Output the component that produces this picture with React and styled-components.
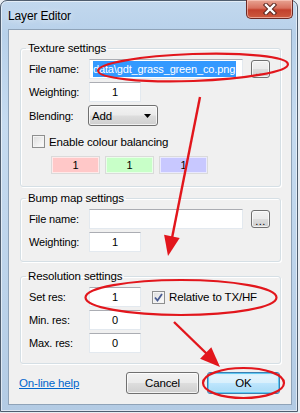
import React from 'react'
import styled, { createGlobalStyle } from 'styled-components'

const GlobalStyle = createGlobalStyle`
  html, body {
    margin: 0;
    padding: 0;
    background: #e9eef3;
  }
  body {
    font-family: "Liberation Sans", Arial, sans-serif;
    font-size: 11px;
    letter-spacing: -0.15px;
    color: #000;
  }
`

const Stage = styled.div`
  position: relative;
  width: 300px;
  height: 413px;
  overflow: hidden;
`

const Window = styled.div`
  box-sizing: border-box;
  width: 298px;
  height: 412px;
  border: 1px solid #4f5d6e;
  border-radius: 7px 7px 0 0;
  background: linear-gradient(180deg, #c2d8ee 0%, #b8d1ea 8%, #c6dbf0 30%, #bcd3ea 70%, #b3cbe4 100%);
  box-shadow: inset 0 0 0 1px rgba(255, 255, 255, 0.55);
  display: flex;
  flex-direction: column;
`

const TitleBar = styled.div`
  height: 28px;
  display: flex;
  align-items: flex-start;
  justify-content: space-between;
`

const Title = styled.div`
  padding: 7px 0 0 7px;
  font-size: 12px;
  line-height: 16px;
  color: #000;
  text-shadow: 0 0 6px rgba(255, 255, 255, 0.9);
`

const CloseButton = styled.div`
  width: 47px;
  height: 19px;
  margin: -1px 4px 0 0;
  box-sizing: border-box;
  border: 1px solid #6b2a25;
  border-top: none;
  border-radius: 0 0 5px 5px;
  background: linear-gradient(180deg, #e8a493 0%, #d8705e 45%, #c2402c 55%, #cc5a3f 100%);
  box-shadow: inset 0 0 0 1px rgba(255, 210, 200, 0.6);
  display: flex;
  align-items: center;
  justify-content: center;
`

const Client = styled.div`
  box-sizing: border-box;
  width: 284px;
  height: 376px;
  margin-left: 7px;
  border: 1px solid #8fa3b8;
  background: #f0f0f0;
  padding: 10px 10px 10px 11px;
  display: flex;
  flex-direction: column;
`

const Group = styled.fieldset`
  margin: ${p => p.$top || 0}px 0 0 0;
  padding: 0 8px ${p => p.$bottom || 9}px 8px;
  border: 1px solid #d5dfe5;
  border-radius: 3px;
  min-width: 0;
  box-shadow: inset 1px 1px 0 #fff, 1px 1px 0 #fff;
`

const Legend = styled.legend`
  padding: 0 2px;
  margin-left: -3px;
  font-size: 11.5px;
  line-height: 16px;
`

const Row = styled.div`
  display: flex;
  align-items: center;
  height: ${p => p.$h || 20}px;
  margin-top: ${p => p.$mt ?? 3}px;
`

const Label = styled.span`
  width: 60px;
  flex: none;
  line-height: 20px;
`

const TextBox = styled.div`
  box-sizing: border-box;
  width: ${p => p.$w}px;
  height: 20px;
  flex: none;
  background: #fff;
  border: 1px solid #e3e9ef;
  border-top-color: #abadb3;
  display: flex;
  align-items: center;
  justify-content: ${p => (p.$left ? 'flex-start' : 'center')};
  padding: 0 3px;
  line-height: 16px;
  overflow: hidden;
  white-space: nowrap;
`

const Selected = styled.span`
  background: #3399ff;
  color: #fff;
  line-height: 16px;
  padding-right: 1px;
`

const SmallButton = styled.div`
  box-sizing: border-box;
  width: 19px;
  height: 18px;
  margin-left: 8px;
  flex: none;
  border: 1px solid #707070;
  border-radius: 3px;
  background: linear-gradient(180deg, #f2f2f2 0%, #ebebeb 48%, #dddddd 52%, #cfcfcf 100%);
  box-shadow: inset 0 0 0 1px rgba(255, 255, 255, 0.7);
  display: flex;
  align-items: flex-end;
  justify-content: center;
  font-size: 11px;
  line-height: 12px;
  letter-spacing: 0.5px;
`

const Select = styled.div`
  box-sizing: border-box;
  width: 70px;
  height: 21px;
  margin-left: -1px;
  border: 1px solid #707070;
  border-radius: 3px;
  background: linear-gradient(180deg, #f2f2f2 0%, #ebebeb 48%, #dddddd 52%, #cfcfcf 100%);
  box-shadow: inset 0 0 0 1px rgba(255, 255, 255, 0.7);
  display: flex;
  align-items: center;
  justify-content: space-between;
  padding: 0 6px 0 3px;
  font-size: 11.5px;
`

const CheckBox = styled.div`
  box-sizing: border-box;
  width: 13px;
  height: 13px;
  flex: none;
  margin: 0 4px 0 ${p => p.$ml || 0}px;
  border: 1px solid #8e8f8f;
  background: linear-gradient(135deg, #dcdcdc 0%, #f4f4f4 70%, #fdfdfd 100%);
  box-shadow: inset 0 0 0 1px #f4f4f4;
  display: flex;
  align-items: center;
  justify-content: center;
`

const CheckLabel = styled.span`
  font-size: 11.5px;
  line-height: 16px;
`

const ColourRow = styled.div`
  display: flex;
  gap: 5px;
  margin: 8px 0 0 22px;
`

const Swatch = styled.div`
  box-sizing: border-box;
  width: 49px;
  height: 18px;
  border: 1px solid #dadada;
  background: ${p => p.$bg};
  display: flex;
  align-items: center;
  justify-content: center;
  box-shadow: inset 0 0 0 1px rgba(255, 255, 255, 0.6);
`

const Footer = styled.div`
  display: flex;
  align-items: center;
  margin-top: 8px;
  height: 22px;
`

const HelpLink = styled.a`
  margin-left: -1px;
  color: #0066cc;
  text-decoration: underline;
  font-size: 11.5px;
  cursor: pointer;
`

const Spacer = styled.div`
  flex: 1;
`

const PushButton = styled.div`
  box-sizing: border-box;
  width: 73px;
  height: 22px;
  margin-left: ${p => p.$ml || 0}px;
  margin-right: ${p => p.$mr || 0}px;
  border: 1px solid ${p => (p.$default ? '#3c7fb1' : '#707070')};
  border-radius: 3px;
  background: ${p =>
    p.$default
      ? 'linear-gradient(180deg, #e9f6fd 0%, #d9f0fc 48%, #bee6fd 52%, #a7d9f5 100%)'
      : 'linear-gradient(180deg, #f2f2f2 0%, #ebebeb 48%, #dddddd 52%, #cfcfcf 100%)'};
  box-shadow: ${p =>
    p.$default
      ? 'inset 0 0 0 1px #5fc8f2, inset 0 0 3px 1px #bdeafc'
      : 'inset 0 0 0 1px rgba(255,255,255,0.75)'};
  display: flex;
  align-items: center;
  justify-content: center;
  font-size: 11.5px;
`

const Overlay = styled.svg`
  position: absolute;
  left: 0;
  top: 0;
  pointer-events: none;
`

const CloseGlyph = () => (
  <svg width="16" height="12" viewBox="0 0 16 12">
    <path d="M4 2 L12 10 M12 2 L4 10" stroke="#5a2620" strokeWidth="4.4" strokeLinecap="square" />
    <path d="M4 2 L12 10 M12 2 L4 10" stroke="#fff" strokeWidth="2.4" strokeLinecap="square" />
  </svg>
)

const Tick = () => (
  <svg width="9" height="9" viewBox="0 0 9 9">
    <path d="M1 4.5 L3.5 7.5 L8 1" fill="none" stroke="#4a5c92" strokeWidth="1.8" />
  </svg>
)

const Arrow = () => (
  <svg width="7" height="4" viewBox="0 0 7 4">
    <path d="M0 0 H7 L3.5 4 Z" fill="#000" />
  </svg>
)

const red = '#e2161c'

const Annotations = () => (
  <Overlay width="300" height="413" viewBox="0 0 300 413">
    <g fill="none" stroke={red} strokeWidth="2.2">
      <ellipse cx="193" cy="67.5" rx="95" ry="13.5" transform="rotate(-2 193 67.5)" />
      <ellipse cx="181" cy="297.5" rx="95.5" ry="17.5" />
      <ellipse cx="243.5" cy="383" rx="40.5" ry="15" />
      <line x1="200" y1="97" x2="172" y2="238" strokeWidth="2.4" />
      <line x1="174" y1="322" x2="207" y2="354" strokeWidth="2.4" />
    </g>
    <g fill={red}>
      <path d="M168 256 L179.7 238 L164.1 234.8 Z" />
      <path d="M220 367 L200.1 358.7 L211.3 347.3 Z" />
    </g>
  </Overlay>
)

export default function App() {
  return (
    <Stage>
      <GlobalStyle />
      <Window>
        <TitleBar>
          <Title>Layer Editor</Title>
          <CloseButton>
            <CloseGlyph />
          </CloseButton>
        </TitleBar>
        <Client>
          <Group $bottom={12}>
            <Legend>Texture settings</Legend>
            <Row>
              <Label>File name:</Label>
              <TextBox $w={154} $left>
                <Selected>data\gdt_grass_green_co.png</Selected>
              </TextBox>
              <SmallButton>...</SmallButton>
            </Row>
            <Row>
              <Label>Weighting:</Label>
              <TextBox $w={52}>1</TextBox>
            </Row>
            <Row $h={21}>
              <Label>Blending:</Label>
              <Select>
                <span>Add</span>
                <Arrow />
              </Select>
            </Row>
            <Row $h={13} $mt={9}>
              <CheckBox $ml={3} />
              <CheckLabel>Enable colour balancing</CheckLabel>
            </Row>
            <ColourRow>
              <Swatch $bg="#ffc8c8">1</Swatch>
              <Swatch $bg="#c8ffc8">1</Swatch>
              <Swatch $bg="#c8c8ff">1</Swatch>
            </ColourRow>
          </Group>

          <Group $top={3} $bottom={9}>
            <Legend>Bump map settings</Legend>
            <Row>
              <Label>File name:</Label>
              <TextBox $w={154} />
              <SmallButton>...</SmallButton>
            </Row>
            <Row>
              <Label>Weighting:</Label>
              <TextBox $w={52}>1</TextBox>
            </Row>
          </Group>

          <Group $top={6} $bottom={10}>
            <Legend>Resolution settings</Legend>
            <Row>
              <Label>Set res:</Label>
              <TextBox $w={52}>1</TextBox>
              <CheckBox $ml={11}>
                <Tick />
              </CheckBox>
              <CheckLabel>Relative to TX/HF</CheckLabel>
            </Row>
            <Row>
              <Label>Min. res:</Label>
              <TextBox $w={52}>0</TextBox>
            </Row>
            <Row>
              <Label>Max. res:</Label>
              <TextBox $w={52}>0</TextBox>
            </Row>
          </Group>

          <Footer>
            <HelpLink>On-line help</HelpLink>
            <Spacer />
            <PushButton>Cancel</PushButton>
            <PushButton $default $ml={8} $mr={1}>OK</PushButton>
          </Footer>
        </Client>
      </Window>
      <Annotations />
    </Stage>
  )
}
